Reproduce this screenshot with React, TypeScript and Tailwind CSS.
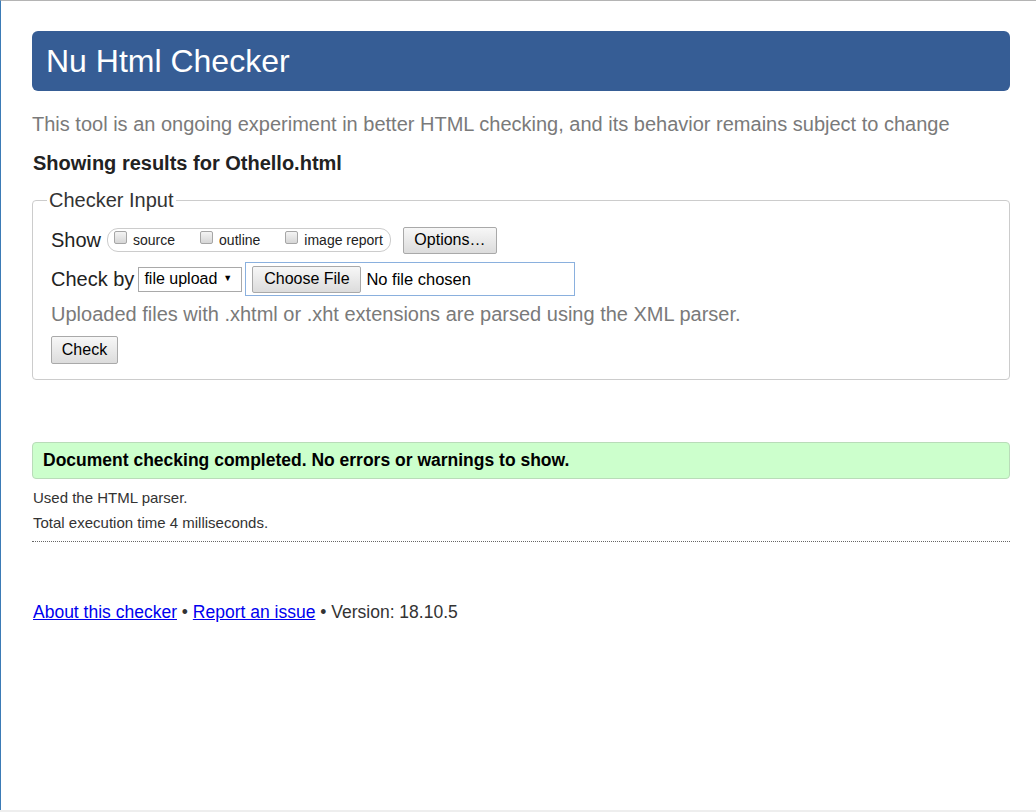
const font = { fontFamily: '"Liberation Sans", Arial, sans-serif' };

function Checkbox({ label }: { label: string }) {
  return (
    <span className="flex items-center gap-[6px]">
      <span className="mb-[6px] h-[13px] w-[13px] rounded-[2px] border border-[#a6a6a6] bg-linear-to-b from-[#f4f4f4] to-[#d6d6d6]" />
      <span className="text-[14px] leading-[18px] text-[#222]">{label}</span>
    </span>
  );
}

function Button({ children, className = '' }: { children: React.ReactNode; className?: string }) {
  return (
    <span
      className={`flex items-center justify-center rounded-[2px] border border-[#a9a9a9] bg-linear-to-b from-[#f7f7f7] to-[#dcdcdc] text-[16px] text-black ${className}`}
    >
      {children}
    </span>
  );
}

export default function App() {
  return (
    <div className="w-[1036px] bg-white" style={font}>
      <div className="h-[810px] border-l border-t border-l-[#3b7bb6] border-t-[#b4b4b4]">
        <div className="ml-[31px] w-[978px] pt-[30px]">
          {/* Header */}
          <div className="flex h-[60px] items-center rounded-[6px] bg-[#365d95] pl-[14px]">
            <h1 className="text-[32px] leading-[36px] text-white">Nu Html Checker</h1>
          </div>

          <p className="mt-[21px] text-[20px] leading-[24px] text-[#7a7a7a]">
            This tool is an ongoing experiment in better HTML checking, and its behavior remains subject to change
          </p>
          <p className="mt-[15px] pl-[1px] text-[20px] font-bold leading-[24px] text-[#222]">
            Showing results for Othello.html
          </p>

          {/* Checker input */}
          <fieldset className="mt-[13px] rounded-[4px] border border-[#cccccc] pb-[15px] pl-[18px]">
            <legend className="-ml-[4px] px-[2px] text-[20px] leading-[24px] text-[#333]">Checker Input</legend>

            <div className="mt-[14px] flex h-[28px] items-center">
              <span className="text-[20px] leading-[24px] text-[#222]">Show</span>
              <span className="ml-[6px] flex h-[24px] items-center gap-[25px] rounded-[11px] border border-[#cccccc] pl-[6px] pr-[7px]">
                <Checkbox label="source" />
                <Checkbox label="outline" />
                <Checkbox label="image report" />
              </span>
              <Button className="ml-[12px] h-[27px] w-[94px]">Options…</Button>
            </div>

            <div className="mt-[8px] flex h-[34px] items-center">
              <span className="text-[20px] leading-[24px] text-[#222]">Check by</span>
              <span className="ml-[4px] flex h-[25px] w-[104px] items-center border border-[#a9a9a9] bg-white pl-[5px] text-[16px] text-black">
                file upload
                <span className="ml-[6px] text-[9px]">▼</span>
              </span>
              <span className="ml-[3px] flex h-[34px] w-[330px] items-center border-[1.5px] border-[#8ab0de] bg-white pl-[6px]">
                <Button className="h-[27px] w-[109px]">Choose File</Button>
                <span className="ml-[5px] text-[16.5px] text-black">No file chosen</span>
              </span>
            </div>

            <p className="mt-[6px] text-[20px] leading-[24px] text-[#7a7a7a]">
              Uploaded files with .xhtml or .xht extensions are parsed using the XML parser.
            </p>

            <Button className="mt-[10px] h-[28px] w-[67px]">Check</Button>
          </fieldset>

          {/* Result */}
          <div className="mt-[62px] flex h-[37px] items-center rounded-[4px] border border-[#b9dcb9] bg-[#ccffcc] pl-[10px]">
            <span className="text-[17.5px] font-bold text-black">
              Document checking completed. No errors or warnings to show.
            </span>
          </div>

          <p className="mt-[10px] pl-[1px] text-[15px] leading-[18px] text-[#333]">Used the HTML parser.</p>
          <p className="mt-[7px] pl-[1px] text-[15px] leading-[18px] text-[#333]">
            Total execution time 4 milliseconds.
          </p>
          <div className="mt-[9px] border-b border-dotted border-[#666]" />

          {/* Footer */}
          <p className="mt-[59px] pl-[1px] text-[17.5px] leading-[22px] text-[#333]">
            <a href="#" className="text-[#0000ee] underline">About this checker</a>
            {' • '}
            <a href="#" className="text-[#0000ee] underline">Report an issue</a>
            {' • Version: 18.10.5'}
          </p>
        </div>
      </div>
      <div className="h-[2px] bg-[#eeeeee]" />
    </div>
  );
}
